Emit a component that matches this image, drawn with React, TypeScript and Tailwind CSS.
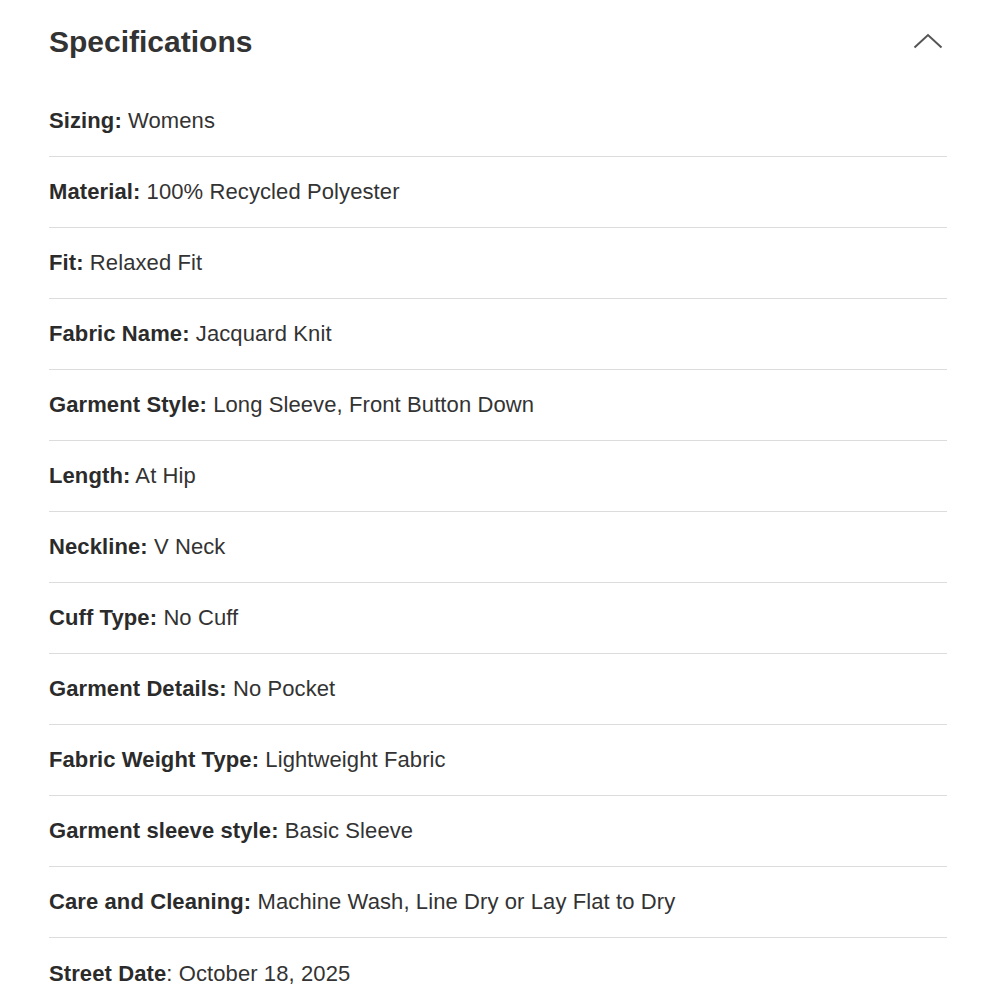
import React from "react";

const specs: { label: string; value: string; plainColon?: boolean }[] = [
  { label: "Sizing", value: "Womens" },
  { label: "Material", value: "100% Recycled Polyester" },
  { label: "Fit", value: "Relaxed Fit" },
  { label: "Fabric Name", value: "Jacquard Knit" },
  { label: "Garment Style", value: "Long Sleeve, Front Button Down" },
  { label: "Length", value: "At Hip" },
  { label: "Neckline", value: "V Neck" },
  { label: "Cuff Type", value: "No Cuff" },
  { label: "Garment Details", value: "No Pocket" },
  { label: "Fabric Weight Type", value: "Lightweight Fabric" },
  { label: "Garment sleeve style", value: "Basic Sleeve" },
  { label: "Care and Cleaning", value: "Machine Wash, Line Dry or Lay Flat to Dry" },
  { label: "Street Date", value: "October 18, 2025", plainColon: true },
];

const App: React.FC = () => {
  return (
    <div
      className="bg-white w-[1000px] h-[1000px] overflow-hidden text-[#333]"
      style={{ fontFamily: '"Liberation Sans", Arial, sans-serif' }}
    >
      <div className="ml-[49px] w-[898px]">
        {/* Header */}
        <div className="flex justify-between items-center h-[86px] pb-[4px]">
          <h2 className="text-[30px] font-bold text-[#333]">Specifications</h2>
          <svg width="30" height="16" viewBox="0 0 30 16" className="mr-[4px]">
            <path d="M1.5 14.5 L15 2 L28.5 14.5" fill="none" stroke="#555" strokeWidth="2" />
          </svg>
        </div>

        {/* Rows */}
        {specs.map((s, i) => (
          <div
            key={s.label}
            className={
              "flex items-center h-[71px] pb-[1px] text-[22px] tracking-[0.1px] " +
              (i < specs.length - 1 ? "border-b border-[#dcdcdc]" : "")
            }
          >
            <span>
              <span className="font-bold text-[#2b2b2b]">
                {s.label}
                {s.plainColon ? "" : ":"}
              </span>
              {s.plainColon ? ":" : ""} {s.value}
            </span>
          </div>
        ))}
      </div>
    </div>
  );
};

export default App;
